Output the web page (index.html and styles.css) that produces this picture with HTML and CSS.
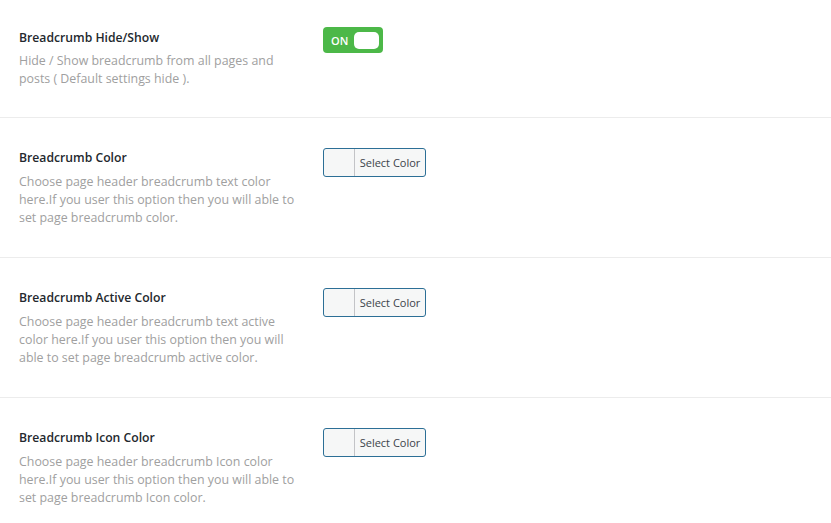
FILE: index.html
```html
<!DOCTYPE html>
<html>
<head>
<meta charset="utf-8">
<link rel="stylesheet" href="styles.css">
</head>
<body>
<div class="settings">
  <div class="row first">
    <div class="info">
      <div class="title">Breadcrumb Hide/Show</div>
      <div class="desc">Hide / Show breadcrumb from all pages and posts ( Default settings hide ).</div>
    </div>
    <div class="control">
      <div class="toggle"><span class="toggle-label">ON</span><span class="knob"></span></div>
    </div>
  </div>
  <div class="row">
    <div class="info">
      <div class="title">Breadcrumb Color</div>
      <div class="desc">Choose page header breadcrumb text color here.If you user this option then you will able to set page breadcrumb color.</div>
    </div>
    <div class="control">
      <button class="color-btn"><span class="swatch"></span><span class="btn-text">Select Color</span></button>
    </div>
  </div>
  <div class="row">
    <div class="info">
      <div class="title">Breadcrumb Active Color</div>
      <div class="desc">Choose page header breadcrumb text active color here.If you user this option then you will able to set page breadcrumb active color.</div>
    </div>
    <div class="control">
      <button class="color-btn"><span class="swatch"></span><span class="btn-text">Select Color</span></button>
    </div>
  </div>
  <div class="row">
    <div class="info">
      <div class="title">Breadcrumb Icon Color</div>
      <div class="desc">Choose page header breadcrumb Icon color here.If you user this option then you will able to set page breadcrumb Icon color.</div>
    </div>
    <div class="control">
      <button class="color-btn"><span class="swatch"></span><span class="btn-text">Select Color</span></button>
    </div>
  </div>
</div>
</body>
</html>
```
FILE: styles.css
```css
html, body {
  margin: 0;
  padding: 0;
  background: #ffffff;
  font-family: "Open Sans", "Noto Sans", sans-serif;
}
.settings {
  display: flex;
  flex-direction: column;
}
.row {
  display: flex;
  gap: 24px;
  padding: 31px 0 30px 19px;
  border-bottom: 1px solid #ececec;
}
.row.first {
  padding-top: 29px;
  padding-bottom: 29px;
}
.info {
  width: 280px;
  flex: none;
}
.title {
  font-size: 12.2px;
  line-height: 18px;
  font-weight: 600;
  color: #23282d;
}
.desc {
  margin-top: 6px;
  font-size: 12.4px;
  line-height: 18px;
  color: #a0a0a0;
}
.row.first .desc {
  margin-top: 5px;
}
.control {
  display: flex;
  align-items: flex-start;
}
.toggle {
  margin-top: -2px;
  width: 60px;
  height: 26px;
  box-sizing: border-box;
  background: #4cb848;
  border-radius: 4px;
  display: flex;
  align-items: center;
  justify-content: space-between;
  padding: 0 4px 0 8px;
}
.toggle-label {
  color: #ffffff;
  font-size: 11px;
  font-weight: 600;
  line-height: 1;
}
.knob {
  width: 25px;
  height: 17px;
  background: #ffffff;
  border-radius: 5px;
}
.color-btn {
  margin-top: -1px;
  display: flex;
  align-items: stretch;
  padding: 0;
  width: 103px;
  height: 29px;
  box-sizing: border-box;
  border: 1px solid #2c6f96;
  border-radius: 3px;
  background: #f6f7f7;
  font-family: inherit;
  cursor: pointer;
}
.swatch {
  width: 30px;
  flex: none;
  border-right: 1px solid #c3c4c7;
}
.btn-text {
  flex: 1;
  display: flex;
  align-items: center;
  justify-content: center;
  font-size: 11px;
  color: #3c434a;
}
```
